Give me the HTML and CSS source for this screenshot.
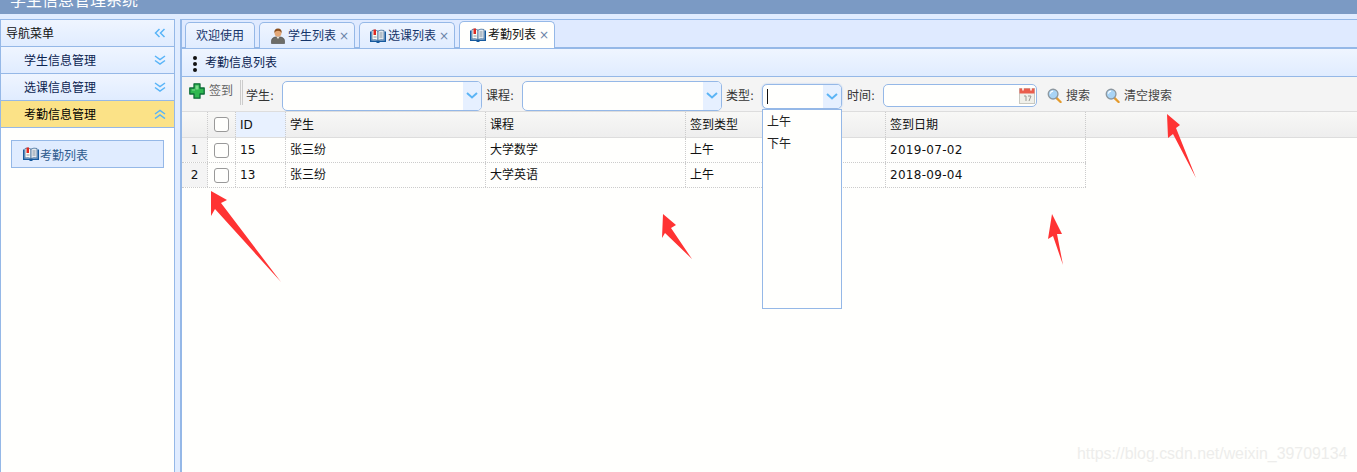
FILE: index.html
```html
<!DOCTYPE html>
<html lang="zh-CN">
<head>
<meta charset="utf-8">
<title>学生信息管理系统</title>
<link rel="stylesheet" href="styles.css">
</head>
<body>
<svg class="defs" width="0" height="0" aria-hidden="true">
  <defs>
    <symbol id="i-book" viewBox="0 0 16 14">
      <path d="M0 2.500h1.500v9h13v-9H16v10.500h-6l-1 1H7l-1-1H0z" fill="#165a9e"/>
      <path d="M2 1.500q3-1 6 .5v9.500q-3-1.500-6-.5z" fill="#fafaf4" stroke="#2f5f8f" stroke-width=".7"/>
      <path d="M8 2q3-1.500 6-.5v9.500q-3-1-6 .5z" fill="#e4e9ee" stroke="#2f5f8f" stroke-width=".7"/>
      <rect x="3.500" y="0.500" width="2.500" height="5.500" fill="#e0281e"/>
      <path d="M9.500 4h3M9.500 6h3M9.500 8h3M3.500 8h3" stroke="#7d8c9b" stroke-width=".9"/>
    </symbol>
    <symbol id="i-user" viewBox="0 0 16 16">
      <path d="M1.500 15.500v-3q0-2.500 3.500-3.500h6q3.500 1 3.500 3.500v3z" fill="#6d6d68" stroke="#4a4a46" stroke-width=".6"/>
      <path d="M6.500 9l1.500 2 1.500-2z" fill="#e8e4da"/>
      <circle cx="8" cy="5.200" r="3.400" fill="#e3a878"/>
      <path d="M4.300 5q-.3-4.500 3.700-4.500t3.700 4.500q-1.200-2.300-3.700-2.300t-3.700 2.300z" fill="#8a4f1e"/>
    </symbol>
    <symbol id="i-search" viewBox="0 0 16 16">
      <path d="M10 10.500l4.500 4.500" stroke="#e49a2c" stroke-width="2.400" stroke-linecap="round"/>
      <circle cx="6.500" cy="6.500" r="5.200" fill="#a9d4f5" stroke="#8c979f" stroke-width="1.400"/>
      <path d="M3.500 6q.5-2.500 3-2.700" stroke="#fff" stroke-width="1.200" fill="none"/>
    </symbol>
  </defs>
</svg>

<header class="topbar"><span class="brand">学生信息管理系统</span></header>

<div class="shell">
  <aside class="side">
    <div class="side-head">
      <span>导航菜单</span>
      <svg class="chev" viewBox="0 0 12 10"><path d="M5.500 1L1.500 5l4 4M10.500 1l-4 4 4 4" /></svg>
    </div>
    <div class="acc"><span>学生信息管理</span><svg class="chev" viewBox="0 0 12 10"><path d="M1 1l5 3.500L11 1M1 5.500L6 9l5-3.500"/></svg></div>
    <div class="acc"><span>选课信息管理</span><svg class="chev" viewBox="0 0 12 10"><path d="M1 1l5 3.500L11 1M1 5.500L6 9l5-3.500"/></svg></div>
    <div class="acc acc-on"><span>考勤信息管理</span><svg class="chev" viewBox="0 0 12 10"><path d="M1 5l5-3.500L11 5M1 9.500L6 6l5 3.500"/></svg></div>
    <div class="side-body">
      <a class="side-link"><svg class="ico-book"><use href="#i-book"/></svg><span class="side-text">考勤列表</span></a>
    </div>
  </aside>

  <main class="main">
    <nav class="tabs">
      <div class="tab tab-first">欢迎使用</div>
      <div class="tab"><svg class="ico-user"><use href="#i-user"/></svg>学生列表<i class="x">×</i></div>
      <div class="tab"><svg class="ico-book"><use href="#i-book"/></svg>选课列表<i class="x">×</i></div>
      <div class="tab tab-on"><svg class="ico-book"><use href="#i-book"/></svg>考勤列表<i class="x">×</i></div>
    </nav>
    <div class="content">
      <div class="title-bar"><span class="dots"><b></b><b></b><b></b></span>考勤信息列表</div>
      <div class="toolbar">
        <a class="btn-add">
          <svg class="ico-plus" viewBox="0 0 16 16"><path d="M5 .8h6v4.200h4.200v6H11v4.200H5V11H.8V5H5z" fill="#2fb84f" stroke="#0d6b36" stroke-width="1.300" stroke-linejoin="round"/><path d="M6.500 2.500h3v4h-3zM3 6.500h3v1H3z" fill="#9ee8a8" opacity=".7"/></svg>
          签到
        </a>
        <span class="sep"></span>
        <label class="lbl lbl-a">学生:</label>
        <div class="combo combo-lg"><span class="combo-text"></span><span class="combo-arrow"><svg viewBox="0 0 12 7"><path d="M1 1l5 4.500L11 1"/></svg></span></div>
        <label class="lbl lbl-b">课程:</label>
        <div class="combo combo-lg"><span class="combo-text"></span><span class="combo-arrow"><svg viewBox="0 0 12 7"><path d="M1 1l5 4.500L11 1"/></svg></span></div>
        <label class="lbl lbl-b">类型:</label>
        <div class="combo combo-sm focus"><span class="combo-text"><span class="caret"></span></span><span class="combo-arrow"><svg viewBox="0 0 12 7"><path d="M1 1l5 4.500L11 1"/></svg></span>
          <ul class="drop"><li>上午</li><li>下午</li></ul>
        </div>
        <label class="lbl lbl-c">时间:</label>
        <div class="date">
          <span class="combo-text"></span>
          <svg class="ico-cal" viewBox="0 0 16 17"><rect x=".5" y="1.500" width="15" height="15" fill="#f0f0ea" stroke="#c9c9c2"/><rect x=".5" y="1.500" width="15" height="5" fill="#ea5d4c"/><path d="M4 .5v3M12 .5v3" stroke="#fff" stroke-width="1.500"/><path d="M5 9h2v5M9 9h3l-2 5" stroke="#9a9a94" fill="none"/></svg>
        </div>
        <a class="link link-a"><svg class="ico-search"><use href="#i-search"/></svg>搜索</a>
        <a class="link link-b"><svg class="ico-search"><use href="#i-search"/></svg>清空搜索</a>
      </div>
      <div class="grid">
        <div class="row head">
          <div class="c c-n"></div>
          <div class="c c-k"><span class="check"></span></div>
          <div class="c c-id hl">ID</div>
          <div class="c c-w">学生</div>
          <div class="c c-w">课程</div>
          <div class="c c-w">签到类型</div>
          <div class="c c-w">签到日期</div>
        </div>
        <div class="row">
          <div class="c c-n">1</div>
          <div class="c c-k"><span class="check"></span></div>
          <div class="c c-id">15</div>
          <div class="c c-w">张三纷</div>
          <div class="c c-w">大学数学</div>
          <div class="c c-w">上午</div>
          <div class="c c-w num">2019-07-02</div>
        </div>
        <div class="row">
          <div class="c c-n">2</div>
          <div class="c c-k"><span class="check"></span></div>
          <div class="c c-id">13</div>
          <div class="c c-w">张三纷</div>
          <div class="c c-w">大学英语</div>
          <div class="c c-w">上午</div>
          <div class="c c-w num">2018-09-04</div>
        </div>
      </div>
    </div>
  </main>
</div>

<svg class="arrows" viewBox="0 0 1357 472" width="1357" height="472" aria-hidden="true">
  <path d="M211 191l16 9-6 3 60 79-66-73-4 7z"/>
  <path d="M663 214l13 11-5 3 21 31-27-26-3 5z"/>
  <path d="M1052 214l10 20-5 0 6 31-10-29-5 3z"/>
  <path d="M1167 114l13 11-4 3 20 50-23-44-5 4z"/>
</svg>
<div class="mark">https://blog.csdn.net/weixin_39709134</div>
</body>
</html>
```
FILE: styles.css
```css
* { box-sizing: border-box; }
html, body { margin: 0; height: 100%; overflow: hidden; }
body {
  width: 1357px; height: 472px; position: relative;
  background: #e0ecff;
  font: 12px/1 "DejaVu Sans", "Noto Sans CJK SC", sans-serif;
  color: #111;
  display: flex; flex-direction: column;
}
.defs { position: absolute; }
.topbar { height: 14px; flex: none; overflow: hidden; background: #7b9ac4; color: #fff; padding-left: 10px; }
.brand { display: block; font-size: 16px; line-height: 16px; margin-top: -7px; }
.shell { flex: 1; display: flex; gap: 5px; margin-top: 5px; min-height: 0; }

.side { width: 175px; flex: none; display: flex; flex-direction: column; background: #fffffd; border: 1px solid #95b8e7; border-bottom: 0; }
.side-head, .acc {
  height: 27px; flex: none; display: flex; align-items: center; justify-content: space-between;
  background: linear-gradient(#eff5ff, #e0ecff); border-bottom: 1px solid #95b8e7;
  padding-right: 8px;
}
.side-head span, .acc span { padding-top: 2px; }
.side-head { padding-left: 5px; color: #111; }
.acc { padding-left: 23px; }
.acc span { color: #0a2350; }
.acc-on { background: #fbe287; }
.acc-on span { color: #000; }
.chev { width: 12px; height: 10px; fill: none; stroke: #58b4f8; stroke-width: 1.500; }
.side-body { padding: 12px 10px; }
.side-link { display: flex; align-items: center; height: 28px; width: 153px; padding-left: 11px; background: #e0ecff; border: 1px solid #95b8e7; color: #2d5a8e; }
.side-text { margin-left: 1px; padding-top: 3px; }
.ico-book { width: 16px; height: 14px; flex: none; }

.main { flex: 1; min-width: 0; display: flex; flex-direction: column; border-top: 1px solid #95b8e7; border-left: 2px solid #95b8e7; background: #fffffd; }
.tabs { height: 29px; flex: none; display: flex; gap: 4px; align-items: flex-end; padding-left: 3px; background: #dfeaff; border-bottom: 2px solid #95b8e7; }
.tab { width: 96px; height: 26px; margin-bottom: -1px; display: flex; align-items: center; padding: 0 4px 0 10px; background: linear-gradient(#eff5ff, #e0ecff); border: 1px solid #95b8e7; border-bottom: 0; border-radius: 5px 5px 0 0; color: #15356a; }
.tab-first { padding: 0 10px; width: 70px; }
.tab-on { background: #fffffd; height: 27px; color: #111; }
.tab .ico-book, .ico-user { margin-right: 2px; }
.ico-user { width: 16px; height: 16px; flex: none; }
.x { font-style: normal; color: #6c84a8; margin-left: 3px; font-size: 12px; width: 10px; text-align: center; }

.content { flex: 1; min-height: 0; display: flex; flex-direction: column; }
.title-bar { height: 28px; flex: none; display: flex; align-items: center; padding-left: 11px; background: linear-gradient(#eff5ff, #e0ecff); border-bottom: 1px solid #95b8e7; color: #0a2350; }
.dots { display: flex; flex-direction: column; gap: 2px; margin-right: 8px; padding-top: 2px; }
.dots b { width: 4px; height: 4px; border-radius: 50%; background: #111; }

.toolbar { height: 35px; flex: none; display: flex; align-items: center; background: #f4f4f4; border-bottom: 1px solid #ddd; padding: 3px 0 0 7px; color: #333; }
.btn-add { display: flex; align-items: center; color: #666; width: 51px; gap: 4px; margin-top: -9px; }
.ico-plus { width: 16px; height: 16px; flex: none; }
.sep { width: 3px; height: 25px; border-left: 1px solid #ccc; border-right: 1px solid #ccc; margin: -7px 3px 0 0; }
.lbl { white-space: nowrap; width: 30px; }
.lbl-a { margin-right: 6px; }
.lbl-b { margin-left: 4px; margin-right: 6px; }
.lbl-c { margin-left: 5px; margin-right: 6px; }
.combo { position: relative; display: flex; background: #fffffd; border: 1px solid #95b8e7; border-radius: 5px; }
.combo-lg { width: 200px; height: 30px; }
.combo-sm { width: 80px; height: 25px; margin-top: 1px; box-shadow: 0 0 2px #a9c6ee; }
.combo-text { flex: 1; min-width: 0; display: flex; align-items: center; padding-left: 4px; }
.caret { width: 1px; height: 15px; background: #111; }
.combo-arrow { width: 18px; flex: none; display: flex; align-items: center; justify-content: center; background: #e6f0ff; border-radius: 0 4px 4px 0; }
.combo-arrow svg { width: 12px; height: 7px; fill: none; stroke: #5bb4f5; stroke-width: 2; }
.drop { position: absolute; z-index: 5; left: -1px; top: 24px; width: 80px; height: 200px; margin: 0; padding: 1px 0 0 4px; list-style: none; background: #fffffd; border: 1px solid #95b8e7; }
.drop li { height: 22px; line-height: 22px; color: #222; }
.date { width: 154px; height: 23px; display: flex; background: #fffffd; border: 1px solid #95b8e7; border-radius: 5px; }
.ico-cal { width: 16px; height: 17px; flex: none; margin: 2px 1px 0 0; }
.link { display: flex; align-items: center; gap: 4px; color: #444; }
.link-a { margin-left: 10px; }
.link-b { margin-left: 15px; }
.ico-search { width: 15px; height: 15px; flex: none; }

.grid { display: flex; flex-direction: column; align-items: flex-start; }
.row { display: flex; height: 25px; border-bottom: 1px dotted #ccc; width: 904px; }
.row.head { width: 100%; height: 26px; background: linear-gradient(#f8f8f6, #eee); border-bottom: 1px solid #ddd; }
.c { display: flex; align-items: center; padding-left: 4px; border-right: 1px dotted #ccc; }
.c-n { width: 26px; justify-content: center; padding: 0; background: #f4f4f4; }
.head .c-n { background: none; }
.c-k { width: 28px; justify-content: center; padding: 0; }
.c-id { width: 50px; }
.c-w { width: 200px; }
.num { letter-spacing: .3px; }
.hl { background: #e8f1ff; }
.check { width: 15px; height: 15px; border: 1px solid #999; border-radius: 3px; background: #fffffd; }

.arrows { position: absolute; left: 0; top: 0; pointer-events: none; z-index: 9; }
.arrows path { fill: #ff3333; }
.mark { position: absolute; z-index: 9; left: 1077px; top: 445px; font: 15.900px/18px "Liberation Sans", sans-serif; color: #ededeb; }
```
